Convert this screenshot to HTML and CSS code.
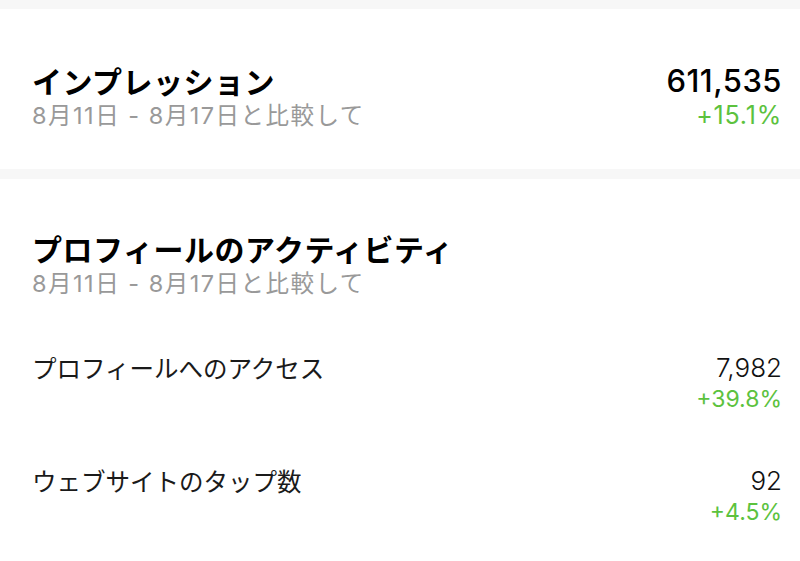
FILE: index.html
```html
<!DOCTYPE html>
<html lang="ja">
<head>
<meta charset="utf-8">
<link rel="stylesheet" href="styles.css">
</head>
<body>
<div class="band"></div>
<section class="card first">
  <div class="row">
    <h2 class="title">インプレッション</h2>
    <div class="big">611,535</div>
  </div>
  <div class="row">
    <div class="sub">8月11日 - 8月17日と比較して</div>
    <div class="pct big-pct">+15.1%</div>
  </div>
</section>
<div class="band"></div>
<section class="card second">
  <h2 class="title">プロフィールのアクティビティ</h2>
  <div class="sub">8月11日 - 8月17日と比較して</div>
  <div class="item">
    <div class="label">プロフィールへのアクセス</div>
    <div class="vals">
      <div class="val">7,982</div>
      <div class="pct">+39.8%</div>
    </div>
  </div>
  <div class="item">
    <div class="label">ウェブサイトのタップ数</div>
    <div class="vals">
      <div class="val">92</div>
      <div class="pct">+4.5%</div>
    </div>
  </div>
</section>
</body>
</html>
```
FILE: styles.css
```css
html, body {
  margin: 0;
  padding: 0;
  background: #ffffff;
}
body {
  font-family: "Inter", "Noto Sans CJK JP", sans-serif;
  color: #111;
  width: 800px;
  height: 561px;
  overflow: hidden;
}
.band {
  height: 10px;
  background: #f7f7f7;
}
.band:first-child {
  height: 9px;
}
.card {
  padding: 0 18px 0 32px;
}
.first {
  padding-top: 54px;
  padding-bottom: 36px;
}
.second {
  padding-top: 52px;
}
.row {
  display: flex;
  justify-content: space-between;
  align-items: center;
  height: 35px;
}
.title {
  margin: 0;
  font-family: "Noto Sans CJK JP", sans-serif;
  font-size: 30px;
  font-weight: 700;
  line-height: 35px;
  letter-spacing: 0.5px;
  color: #000;
}
.sub {
  font-size: 23.5px;
  line-height: 35px;
  color: #999999;
  letter-spacing: 1.5px;
}
.big {
  font-size: 31px;
  font-weight: 500;
  line-height: 35px;
  letter-spacing: 0.5px;
  color: #000;
}
.pct {
  color: #5cc23e;
  font-size: 23px;
  line-height: 30px;
}
.big-pct {
  font-size: 25px;
  line-height: 35px;
  letter-spacing: 0.8px;
}
.item {
  display: flex;
  justify-content: space-between;
  align-items: flex-start;
  margin-top: 51px;
}
.label {
  font-family: "Noto Sans CJK JP", sans-serif;
  font-size: 24.5px;
  line-height: 32px;
  color: #1a1a1a;
}
.vals {
  display: flex;
  flex-direction: column;
  align-items: flex-end;
}
.val {
  font-size: 26px;
  font-weight: 300;
  line-height: 32px;
  color: #111;
}
```
